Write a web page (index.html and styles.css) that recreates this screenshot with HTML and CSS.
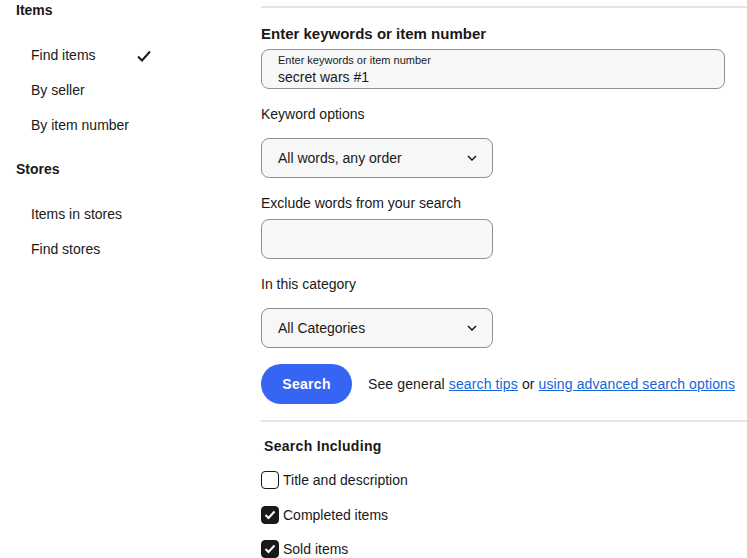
FILE: index.html
```html
<!DOCTYPE html>
<html lang="en">
<head>
    <meta charset="UTF-8">
    <title>Advanced Search</title>
    <link rel="stylesheet" href="styles.css">
</head>
<body>
    <div class="page">
        <nav class="sidebar">
            <h3 class="side-title">Items</h3>
            <ul class="side-list">
                <li class="active">Find items
                    <svg class="tick" width="14" height="12" viewBox="0 0 14 12"><path d="M1 6.5 L5 10.5 L13 1.5" fill="none" stroke="#191919" stroke-width="2"/></svg>
                </li>
                <li>By seller</li>
                <li>By item number</li>
            </ul>
            <h3 class="side-title">Stores</h3>
            <ul class="side-list">
                <li>Items in stores</li>
                <li>Find stores</li>
            </ul>
        </nav>

        <main class="main">
            <hr class="rule">
            <h2 class="field-title">Enter keywords or item number</h2>
            <div class="textbox wide">
                <span class="float-label">Enter keywords or item number</span>
                <span class="value">secret wars #1</span>
            </div>

            <div class="label">Keyword options</div>
            <div class="select">
                <span>All words, any order</span>
                <svg class="chev" width="10" height="6" viewBox="0 0 10 6"><path d="M1 1 L5 5 L9 1" fill="none" stroke="#191919" stroke-width="1.5"/></svg>
            </div>

            <div class="label tight">Exclude words from your search</div>
            <div class="textbox narrow"></div>

            <div class="label">In this category</div>
            <div class="select">
                <span>All Categories</span>
                <svg class="chev" width="10" height="6" viewBox="0 0 10 6"><path d="M1 1 L5 5 L9 1" fill="none" stroke="#191919" stroke-width="1.5"/></svg>
            </div>

            <div class="actions">
                <button class="btn">Search</button>
                <span class="tips">See general <a href="#">search tips</a> or <a href="#">using advanced search options</a></span>
            </div>

            <hr class="rule">
            <h3 class="group-title">Search Including</h3>
            <label class="check"><span class="box"></span>Title and description</label>
            <label class="check"><span class="box on"><svg width="12" height="10" viewBox="0 0 12 10"><path d="M1.5 5 L4.5 8 L10.5 1.5" fill="none" stroke="#fff" stroke-width="2"/></svg></span>Completed items</label>
            <label class="check"><span class="box on"><svg width="12" height="10" viewBox="0 0 12 10"><path d="M1.5 5 L4.5 8 L10.5 1.5" fill="none" stroke="#fff" stroke-width="2"/></svg></span>Sold items</label>
        </main>
    </div>
</body>
</html>
```

FILE: styles.css
```css
body {
    margin: 0;
    font-family: "Liberation Sans", Arial, sans-serif;
    font-size: 14px;
    color: #191919;
    background: #fff;
}
.page {
    display: flex;
}
.sidebar {
    width: 261px;
    flex-shrink: 0;
}
.side-title {
    margin: 0;
    padding-left: 16px;
    font-size: 14px;
    font-weight: bold;
    line-height: 20px;
}
.side-list {
    list-style: none;
    margin: 0;
    padding: 18px 0 16px 31px;
}
.side-list li {
    height: 35px;
    line-height: 35px;
    display: flex;
    align-items: center;
}
.tick {
    margin-left: 41px;
}
.main {
    flex: 1;
}
.rule {
    border: none;
    border-top: 2px solid #e5e5e5;
    margin: 6px 0 0 0;
}
.field-title {
    margin: 16px 0 5px;
    font-size: 15px;
    font-weight: bold;
    line-height: 20px;
}
.textbox, .select {
    box-sizing: border-box;
    height: 40px;
    border: 1px solid #8f8f8f;
    border-radius: 8px;
    background: #f7f7f7;
}
.wide {
    width: 464px;
    padding: 4px 16px 0;
}
.narrow {
    width: 232px;
}
.float-label {
    display: block;
    font-size: 11px;
    line-height: 13px;
}
.value {
    display: block;
    font-size: 14px;
    line-height: 20px;
}
.label {
    margin: 15px 0 14px;
    line-height: 20px;
}
.label.tight {
    margin-bottom: 6px;
}
.select {
    width: 232px;
    display: flex;
    align-items: center;
    justify-content: space-between;
    padding: 0 15px 0 16px;
}
.actions {
    display: flex;
    align-items: center;
    gap: 16px;
    margin-top: 16px;
}
.btn {
    width: 91px;
    height: 40px;
    border: none;
    border-radius: 20px;
    background: #3665f3;
    color: #fff;
    font-family: "Liberation Sans", Arial, sans-serif;
    font-size: 14px;
    font-weight: bold;
    letter-spacing: 0.3px;
}
.tips {
    letter-spacing: 0.12px;
}
.actions a {
    color: #1565d8;
}
.actions + .rule {
    margin-top: 16px;
}
.group-title {
    margin: 14px 0 7px 3px;
    font-size: 14px;
    font-weight: bold;
    letter-spacing: 0.3px;
    line-height: 20px;
}
.check {
    display: flex;
    align-items: center;
    height: 34.5px;
    gap: 4px;
}
.box {
    box-sizing: border-box;
    width: 18px;
    height: 18px;
    border: 1px solid #191919;
    border-radius: 4px;
    display: flex;
    align-items: center;
    justify-content: center;
}
.box.on {
    background: #191919;
}
```
